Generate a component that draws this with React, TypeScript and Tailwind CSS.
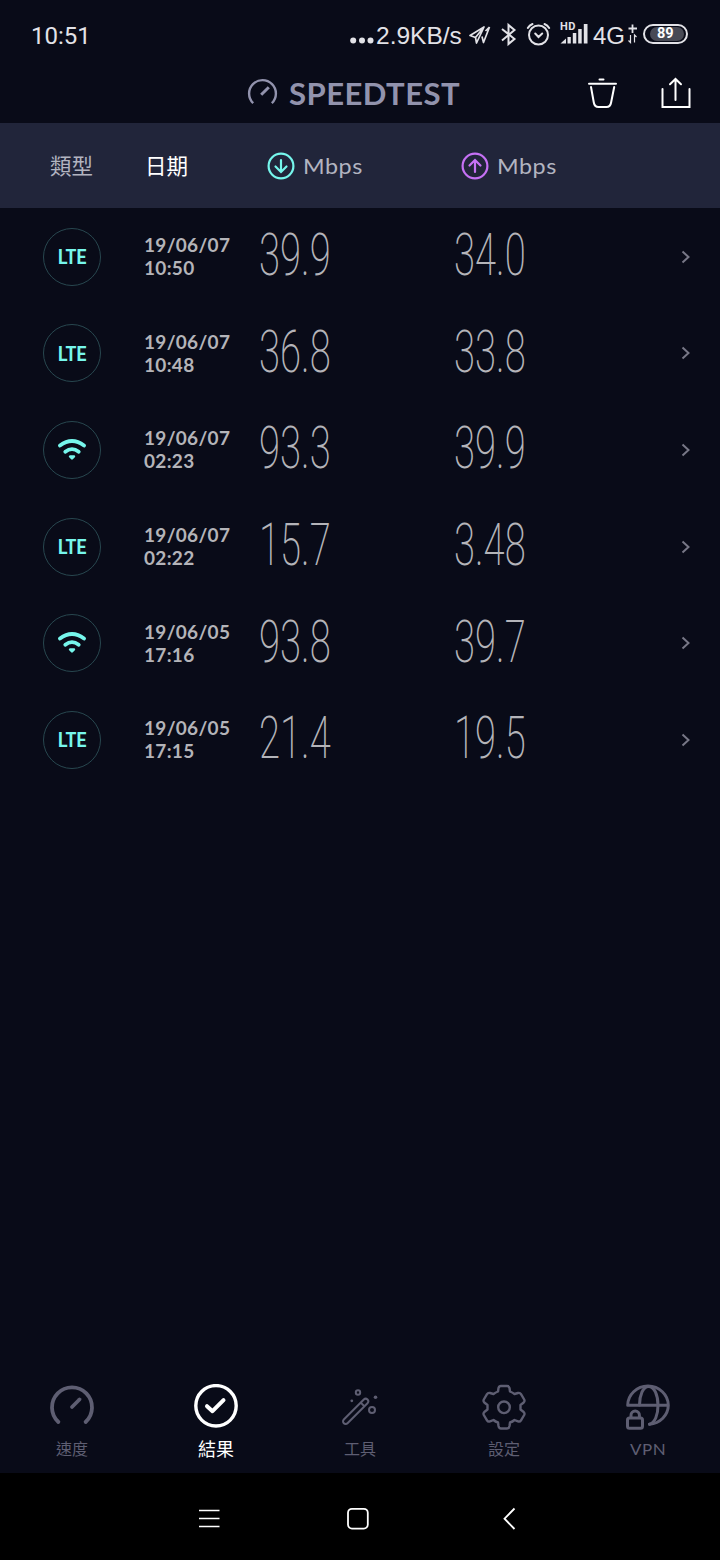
import React from 'react';

type Connection = 'lte' | 'wifi';

interface TestResult {
  type: Connection;
  date: string;
  time: string;
  download: string;
  upload: string;
}

const results: TestResult[] = [
  { type: 'lte', date: '19/06/07', time: '10:50', download: '39.9', upload: '34.0' },
  { type: 'lte', date: '19/06/07', time: '10:48', download: '36.8', upload: '33.8' },
  { type: 'wifi', date: '19/06/07', time: '02:23', download: '93.3', upload: '39.9' },
  { type: 'lte', date: '19/06/07', time: '02:22', download: '15.7', upload: '3.48' },
  { type: 'wifi', date: '19/06/05', time: '17:16', download: '93.8', upload: '39.7' },
  { type: 'lte', date: '19/06/05', time: '17:15', download: '21.4', upload: '19.5' },
];

const StatusBar: React.FC = () => (
  <div className="flex h-16 items-start pt-[22px] pl-[31px] text-[#e2e2e7]">
    <span className="w-[319px] font-['Roboto','Noto_Sans',sans-serif] text-[24px] leading-[28px]">10:51</span>
    <svg width="24" height="24" fill="currentColor">
      <circle cx="3.2" cy="18.5" r="3" />
      <circle cx="12" cy="18.5" r="3" />
      <circle cx="20.5" cy="18.5" r="3" />
    </svg>
    <span className="w-[94px] pl-0.5 font-['Liberation_Sans',Arial,sans-serif] text-[24.5px] leading-[27px]">2.9KB/s</span>
    <svg className="mt-[3px]" width="24" height="20" fill="none" stroke="currentColor" strokeWidth="1.7" strokeLinejoin="round">
      <path d="M2 10.5L16 2L8.5 18L7.5 12.5ZM7.5 12.5L16 2" />
      <path d="M21.5 2L15.5 17.5L14 11.5M21.5 2L17.5 6" />
    </svg>
    <svg className="ml-[9px]" width="16" height="25" fill="none" stroke="currentColor" strokeWidth="2">
      <path d="M1 7L13.5 17L7.5 22V3L13.5 8L1 18.5" />
    </svg>
    <svg className="ml-[9px]" width="26" height="25" fill="none" stroke="currentColor" strokeWidth="2" strokeLinecap="round">
      <circle cx="12.5" cy="13" r="9.5" />
      <path d="M9.2 11.5L12.5 15L16.2 11.5M1.8 6C3 4 4.5 2.8 6.5 2M23.2 6C22 4 20.5 2.8 18.5 2" />
    </svg>
    <div className="relative ml-2 h-6 w-[33px]">
      <span className="absolute -top-px left-0 font-['Roboto',sans-serif] text-[11px] leading-[11px] font-bold tracking-[0.5px]">HD</span>
      <svg width="30" height="24" fill="currentColor">
        <path d="M0.5 21.5L6 16.5V21.5Z" />
        <rect x="7.5" y="15" width="3.3" height="6.5" />
        <rect x="12.8" y="11" width="3.5" height="10.5" />
        <rect x="18.2" y="7" width="3.5" height="14.5" />
        <rect x="23.8" y="2" width="3.7" height="19.5" />
      </svg>
    </div>
    <span className="w-[35px] font-['Liberation_Sans',Arial,sans-serif] text-[24px] leading-[27px] whitespace-nowrap">4G</span>
    <svg width="10" height="24" fill="none" stroke="currentColor">
      <path d="M4.5 2.5V11M0.5 6.5H9" strokeWidth="1.8" />
      <path d="M2.5 13V20.5L0.5 18.5M6.5 20.5V13L8.5 15" strokeWidth="1.2" />
    </svg>
    <div className="mt-0.5 ml-[5px] flex h-5 w-[45px] items-center rounded-full border-2 border-current p-px">
      <span className="ml-1 flex h-full w-[34px] items-center rounded-full bg-[#484a55] pt-px pl-[7px] font-['Roboto','Noto_Sans',sans-serif] text-[14.5px] leading-none font-bold text-white">
        89
      </span>
    </div>
  </div>
);

const TitleBar: React.FC = () => (
  <div className="flex h-[59px] items-center pl-[247px] text-[#9293ad]">
    <svg className="-mt-[3px]" width="32" height="30" fill="none" stroke="currentColor" strokeWidth="2.4">
      <path d="M6.2 26.2A13.4 13.4 0 1 1 24.8 26.2" />
      <path d="M14.2 17.8L21.8 10.2" strokeWidth="3" />
    </svg>
    <h1 className="ml-[10px] w-[296px] font-['Lato','Noto_Sans',sans-serif] text-[29.5px] leading-[58px] font-bold">
      <span className="inline-block origin-left scale-x-[1.055] tracking-[0.4px]">SPEEDTEST</span>
    </h1>
    <svg className="-mt-px" width="34" height="34" fill="none" stroke="#fff" strokeWidth="2" strokeLinecap="round">
      <path d="M14.5 3.5H18.5M4 7.8H31" />
      <path d="M6 11L8.8 26.5C9.3 29.6 10.4 31 13.5 31H21.5C24.6 31 25.6 29.6 26.1 26.5L29.2 11" />
    </svg>
    <svg className="-mt-px ml-10" width="34" height="34" fill="none" stroke="#fff" strokeWidth="2" strokeLinecap="round">
      <path d="M3.5 13V31H30.5V13M16.5 24V3.5M11 8.3L16.5 3L22 8.3" />
    </svg>
  </div>
);

const DirectionIcon: React.FC<{ up?: boolean }> = ({ up }) => (
  <svg
    className={up ? 'text-[#c671f5]' : 'rotate-180 text-[#76f6ec]'}
    width="28"
    height="28"
    fill="none"
    stroke="currentColor"
    strokeWidth="2.2"
    strokeLinecap="round"
  >
    <circle cx="14" cy="14" r="12.4" />
    <path d="M14 20V8.5M8.5 13.5L14 8L19.5 13.5" />
  </svg>
);

const TableHeader: React.FC = () => (
  <div className="flex h-[85px] items-center bg-[#21253a] font-['Lato','Noto_Sans_CJK_TC',sans-serif] text-[22px] text-[#b2b4c0]">
    <span className="w-[145px] pt-0.5 pl-[50px] text-[21.5px]">類型</span>
    <span className="w-[121.5px] pt-0.5 text-[21.5px] text-white">日期</span>
    <div className="flex w-[194.5px] items-center gap-2">
      <DirectionIcon />
      <span className="origin-left scale-x-[1.06] tracking-[0.5px]">Mbps</span>
    </div>
    <div className="flex items-center gap-2">
      <DirectionIcon up />
      <span className="origin-left scale-x-[1.06] tracking-[0.5px]">Mbps</span>
    </div>
  </div>
);

const WifiIcon: React.FC = () => (
  <svg width="30" height="24" fill="none" stroke="currentColor" strokeWidth="3.8" strokeLinecap="round">
    <path d="M3 7.5Q15 -1.5 27 7.5" />
    <path d="M8.3 13.8Q15 8.5 21.7 13.8" />
    <path d="M13 18.5H17L15 20.5Z" strokeWidth="2.4" fill="currentColor" strokeLinejoin="round" />
  </svg>
);

const Speed: React.FC<{ value: string }> = ({ value }) => (
  <div className="-mt-[3px] w-[194.5px]">
    <span className="inline-block origin-left scale-x-[0.637] font-['Roboto','Noto_Sans',sans-serif] text-[60px] leading-[60px] font-extralight text-[#b4b4b9]">
      {value}
    </span>
  </div>
);

const ResultRow: React.FC<{ result: TestResult }> = ({ result }) => (
  <div className="flex h-[96.7px] items-center pl-[43px]">
    <div className="flex size-[58px] items-center justify-center rounded-full border-[1.5px] border-[#28474f] text-[#76f6ec]">
      {result.type === 'lte' ? (
        <span className="scale-x-[0.88] pt-px font-['Roboto','Noto_Sans',sans-serif] text-[20px] leading-none font-bold">LTE</span>
      ) : (
        <WifiIcon />
      )}
    </div>
    <div className="-mt-px ml-[43px] w-[115px] font-['Lato','Noto_Sans',sans-serif] text-[19px] leading-[23px] font-bold tracking-[0.3px] text-[#b4b4b9]">
      <p>{result.date}</p>
      <p>{result.time}</p>
    </div>
    <Speed value={result.download} />
    <Speed value={result.upload} />
    <svg className="ml-[33px]" width="10" height="14" fill="none" stroke="#777786" strokeWidth="2">
      <path d="M1.5 1.5L7.5 7L1.5 12.5" />
    </svg>
  </div>
);

const SpeedIcon: React.FC = () => (
  <svg width="46" height="46" fill="none" stroke="currentColor" strokeWidth="3.8" strokeLinecap="round">
    <path d="M9.4 38A20 20 0 1 1 36.6 38" />
    <path d="M23 23L30.5 15.5" />
  </svg>
);

const ResultsIcon: React.FC = () => (
  <svg width="46" height="46" fill="none" stroke="currentColor" strokeWidth="3.4" strokeLinecap="round" strokeLinejoin="round">
    <circle cx="23" cy="21.8" r="20.2" />
    <path d="M14 22.2L19.5 27.2L30.5 16.2" strokeWidth="4" />
  </svg>
);

const ToolsIcon: React.FC = () => (
  <svg width="46" height="46" fill="none" stroke="currentColor" strokeWidth="2">
    <path d="M6.8 35.5L26.8 15.5A2.6 2.6 0 0 1 30.5 19.2L10.5 39.2A2.6 2.6 0 0 1 6.8 35.5ZM23.7 18.6L27.4 22.3" />
    <circle cx="21" cy="8.5" r="2.2" />
    <circle cx="35" cy="26" r="3" />
    <circle cx="38.5" cy="13.2" r="1.8" fill="currentColor" stroke="none" />
    <circle cx="14.8" cy="16.8" r="1.4" fill="currentColor" stroke="none" />
  </svg>
);

const SettingsIcon: React.FC = () => (
  <svg width="46" height="46" fill="none" stroke="currentColor" strokeWidth="2.4" strokeLinejoin="round">
    <path d="M20 2H26Q28 2 28.5 4L29 7.5Q31.5 8.5 33.5 10L37 9Q39 8.5 40 10.2L43.2 15.5Q44 17.2 42.7 18.5L39.5 21V25.5L42.7 28Q44 29.3 43.2 31L40 36.3Q39 38 37 37.4L33.5 36Q31.5 37.8 29 38.5L28.5 42Q28 44.5 26 44.5H20Q18 44.5 17.5 42L17 38.5Q14.5 37.8 12.5 36L9 37.4Q7 38 6 36.3L2.8 31Q2 29.3 3.3 28L6.5 25.5V21L3.3 18.5Q2 17.2 2.8 15.5L6 10.2Q7 8.5 9 9L12.5 10Q14.5 8.5 17 7.5L17.5 4Q18 2 20 2Z" />
    <circle cx="23" cy="23.3" r="5.8" />
  </svg>
);

const VpnIcon: React.FC = () => (
  <svg width="46" height="46" fill="none" stroke="currentColor" strokeWidth="3" strokeLinecap="round">
    <path d="M2.7 21.3A20.3 19.2 0 0 1 43.3 21.3A20.3 19.2 0 0 1 24.5 40.2M2.7 21.3H43" />
    <path d="M14.5 21C14.5 11.5 18 2.4 23.5 2.4C29.5 2.4 33 11.5 33 21.3C33 30.5 30 39 24.5 40.2" />
    <rect x="2.5" y="34" width="15" height="10.2" rx="2" />
    <path d="M6 33V31.3A4.2 4.2 0 0 1 14.4 31.3V33" />
  </svg>
);

const tabs = [
  { label: '速度', Icon: SpeedIcon },
  { label: '結果', Icon: ResultsIcon, active: true },
  { label: '工具', Icon: ToolsIcon },
  { label: '設定', Icon: SettingsIcon },
  { label: 'VPN', Icon: VpnIcon },
];

const TabBar: React.FC = () => (
  <nav className="grid h-[90px] grid-cols-5 font-['Lato','Noto_Sans_CJK_TC',sans-serif]">
    {tabs.map(({ label, Icon, active }) => (
      <div key={label} className={`flex flex-col items-center pt-px ${active ? 'text-white' : 'text-[#5e5e72]'}`}>
        <Icon />
        <span
          className={`mt-[7.5px] leading-[22px] ${active ? 'text-[18px]' : 'text-[16px]'} ${
            label === 'VPN' ? 'scale-x-[1.06] tracking-[0.5px]' : ''
          }`}
        >
          {label}
        </span>
      </div>
    ))}
  </nav>
);

const SystemNav: React.FC = () => (
  <div className="flex h-[87px] items-center bg-black pt-[5px] pl-[197px]">
    <svg width="24" height="24" fill="none" stroke="#fff" strokeWidth="1.7">
      <path d="M2 3.5H22.5M2 11.5H22.5M2 19.5H22.5" />
    </svg>
    <svg className="ml-[125px]" width="24" height="24" fill="none" stroke="#fff" strokeWidth="1.8">
      <rect x="2" y="1.8" width="19.8" height="19.8" rx="4" />
    </svg>
    <svg className="ml-[127px]" width="24" height="24" fill="none" stroke="#fff" strokeWidth="1.8">
      <path d="M17.5 1.5L7.5 11.7L17.5 22" />
    </svg>
  </div>
);

const App: React.FC = () => {
  return (
    <div className="flex h-[1560px] w-[720px] flex-col overflow-hidden bg-[#090b18]">
      <StatusBar />
      <TitleBar />
      <TableHeader />
      <main className="flex-1 pt-[0.2px]">
        {results.map((result) => (
          <ResultRow key={`${result.date}-${result.time}`} result={result} />
        ))}
      </main>
      <TabBar />
      <SystemNav />
    </div>
  );
};

export default App;
